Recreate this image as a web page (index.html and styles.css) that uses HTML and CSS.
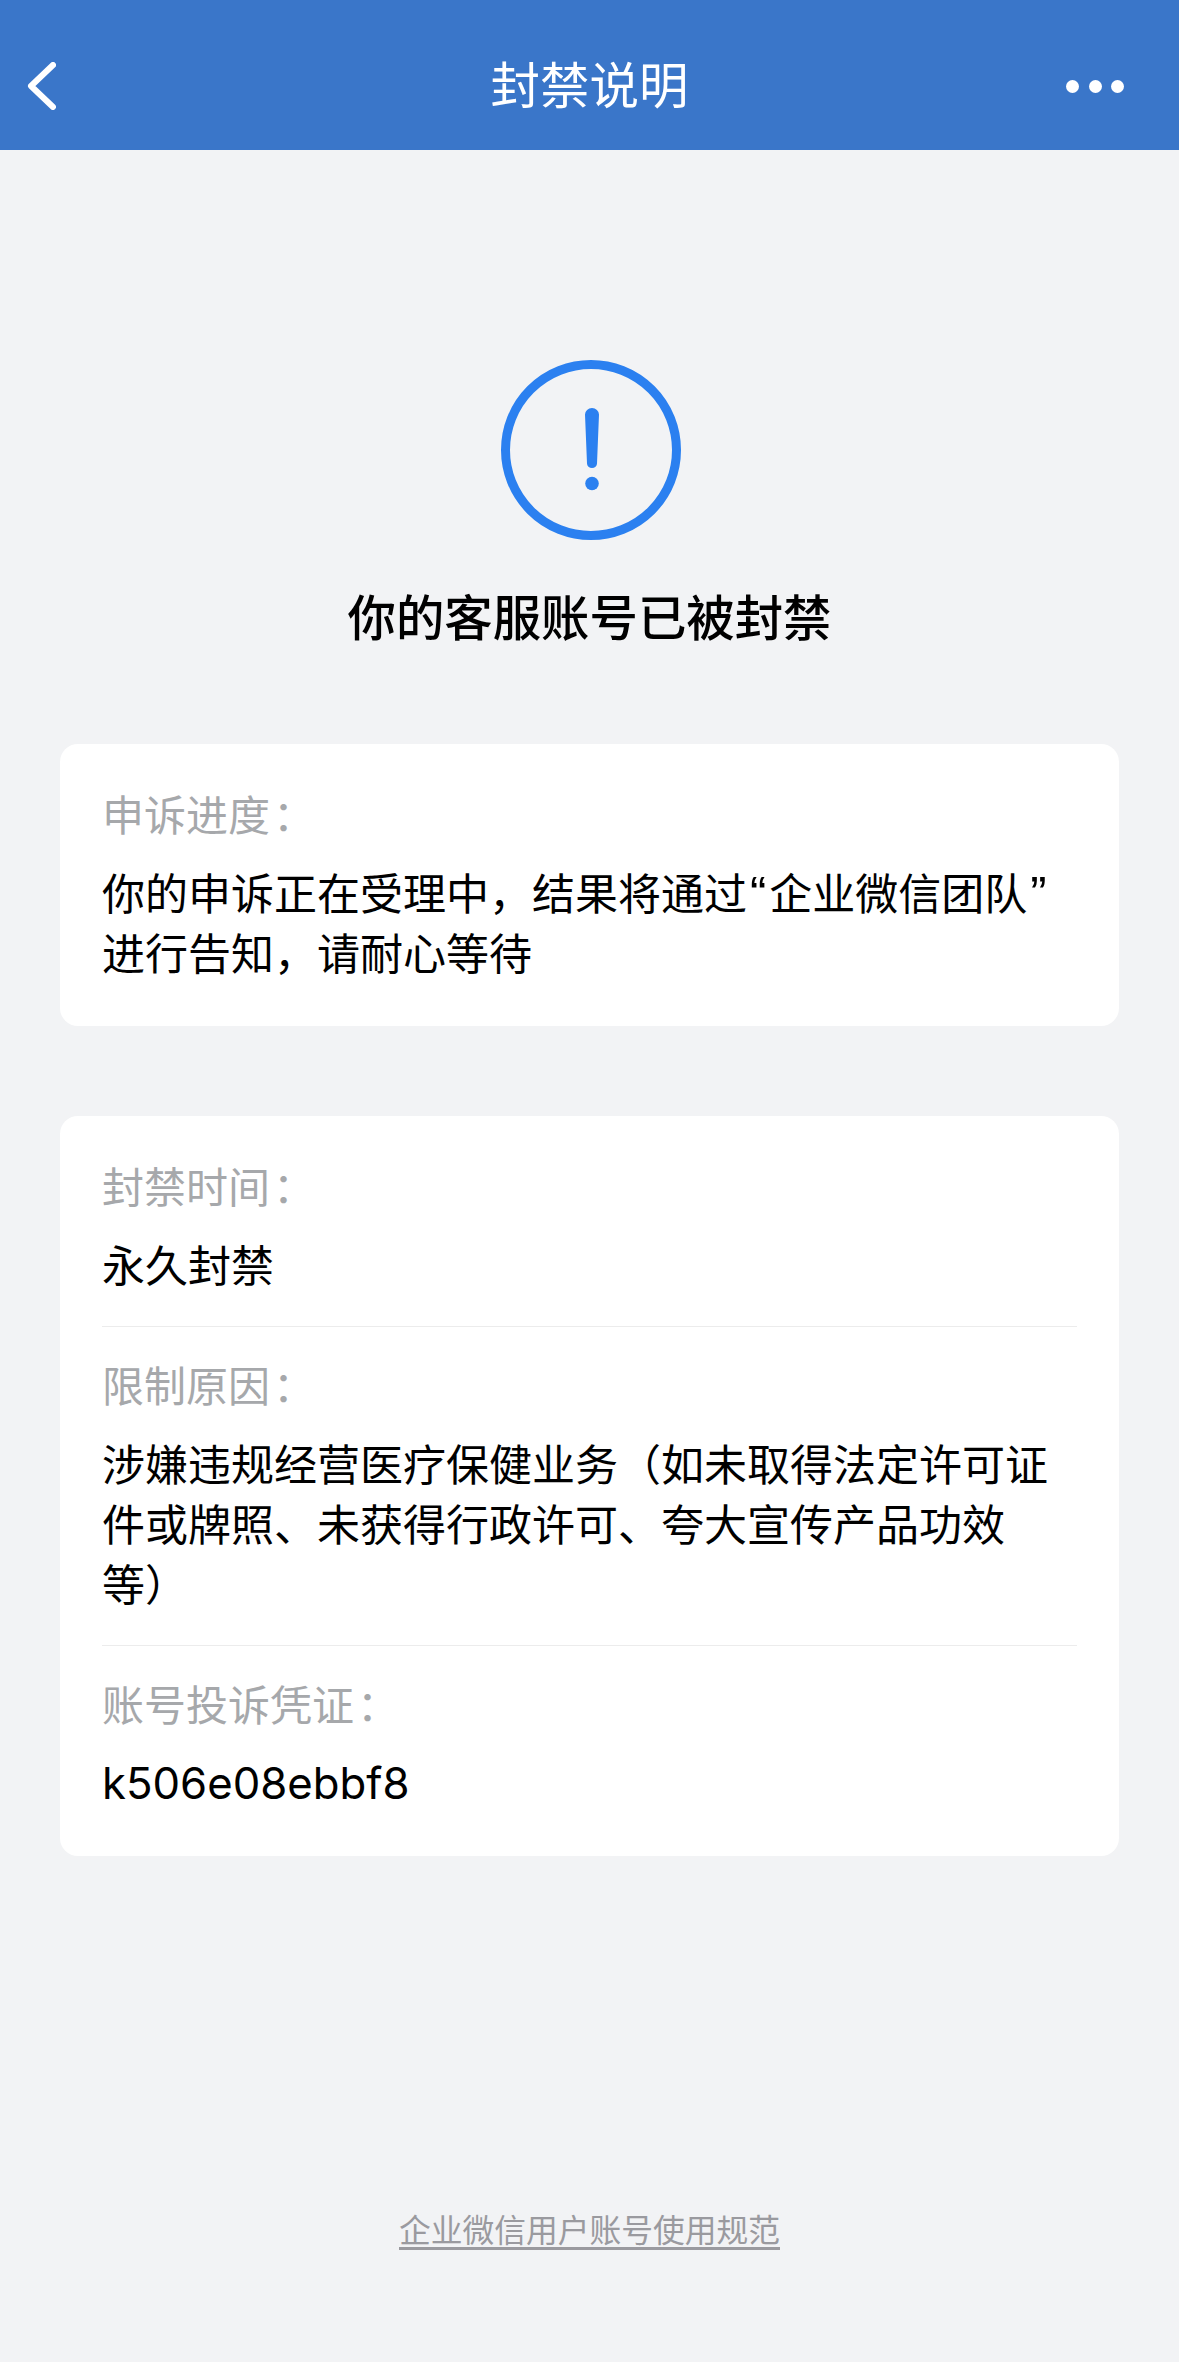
FILE: index.html
```html
<!DOCTYPE html>
<html lang="zh-CN">
<head>
<meta charset="utf-8">
<title>封禁说明</title>
<link rel="stylesheet" href="styles.css">
</head>
<body>
<div class="page">
  <header class="nav">
    <svg class="back" width="30" height="48" viewBox="0 0 30 48"><path d="M27 3 L5 24 L27 45" /></svg>
    <h1 class="nav-title">封禁说明</h1>
    <div class="more"><i></i><i></i><i></i></div>
  </header>
  <main class="main">
    <svg class="warn" width="180" height="180" viewBox="0 0 180 180">
      <circle cx="90" cy="90" r="85.5" fill="none" stroke="#2b80f0" stroke-width="9"/>
      <path d="M84 54.500 a7 6.500 0 0 1 14 0 L96 103.500 a5 4.500 0 0 1 -10 0 Z" fill="#2b80f0"/>
      <circle cx="91" cy="123.500" r="6.800" fill="#2b80f0"/>
    </svg>
    <h2 class="headline">你的客服账号已被封禁</h2>
    <section class="card card-first">
      <div class="item">
        <div class="label">申诉进度<span class="colon">：</span></div>
        <div class="value">你的申诉正在受理中，结果将通过<span class="quote">“</span>企业微信团队<span class="quote">”</span>进行告知，请耐心等待</div>
      </div>
    </section>
    <section class="card">
      <div class="item">
        <div class="label">封禁时间<span class="colon">：</span></div>
        <div class="value">永久封禁</div>
      </div>
      <div class="item item-line">
        <div class="label">限制原因<span class="colon">：</span></div>
        <div class="value">涉嫌违规经营医疗保健业务（如未取得法定许可证件或牌照、未获得行政许可、夸大宣传产品功效等）</div>
      </div>
      <div class="item item-line">
        <div class="label">账号投诉凭证<span class="colon">：</span></div>
        <div class="value value-code">k506e08ebbf8</div>
      </div>
    </section>
  </main>
  <footer class="foot"><a class="foot-link">企业微信用户账号使用规范</a></footer>
</div>
</body>
</html>
```
FILE: styles.css
```css
* { box-sizing: border-box; }
html, body { margin: 0; padding: 0; }
body {
  width: 1179px;
  height: 2362px;
  background: #f2f3f5;
  font-family: "Inter", "Noto Sans CJK SC", sans-serif;
  text-spacing-trim: space-all;
  overflow: hidden;
}
.page { height: 2362px; display: flex; flex-direction: column; }
.nav {
  height: 150px;
  background: #3a76c9;
  display: flex;
  align-items: center;
  justify-content: space-between;
  padding: 22px 55px 0 26px;
  position: relative;
}
.back { display: block; }
.back path { fill: none; stroke: #fff; stroke-width: 6; stroke-linecap: round; stroke-linejoin: round; }
.nav-title {
  position: absolute;
  left: 0; right: 0; top: 51px;
  margin: 0;
  text-align: center;
  color: #fff;
  font-size: 49.500px;
  line-height: 70px;
  font-weight: 400;
}
.more { display: flex; gap: 9.500px; }
.more i { display: block; width: 13px; height: 13px; border-radius: 50%; background: #fff; }
.main { display: flex; flex-direction: column; align-items: center; padding: 210px 60px 0; }
.warn { display: block; margin-left: 2px; }
.headline {
  margin: 46px 0 0;
  font-size: 48.400px;
  line-height: 66px;
  font-weight: 500;
  color: #000;
}
.card {
  width: 100%;
  background: #fff;
  border-radius: 18px;
  padding: 12px 42px;
  margin-top: 90px;
}
.card-first { margin-top: 92px; }
.item { padding: 30px 0; }
.item-line { border-top: 1px solid #ececec; }
.label { font-size: 42px; line-height: 60px; color: #a6a8ab; }
.colon { margin-left: 3px; }
.value { font-size: 43px; line-height: 60px; color: #000; margin-top: 18px; }
.value-code { font-size: 43.700px; }
.quote {
  font-family: "Liberation Sans", sans-serif;
  font-size: 49px;
  line-height: 1;
  margin: 0 3px;
}
.foot { margin-top: auto; padding-bottom: 108px; text-align: center; }
.foot-link {
  font-size: 31.750px;
  line-height: 46px;
  color: #9a9a9f;
  text-decoration: underline;
  text-decoration-thickness: 3px;
  text-underline-offset: 5px;
}
```
